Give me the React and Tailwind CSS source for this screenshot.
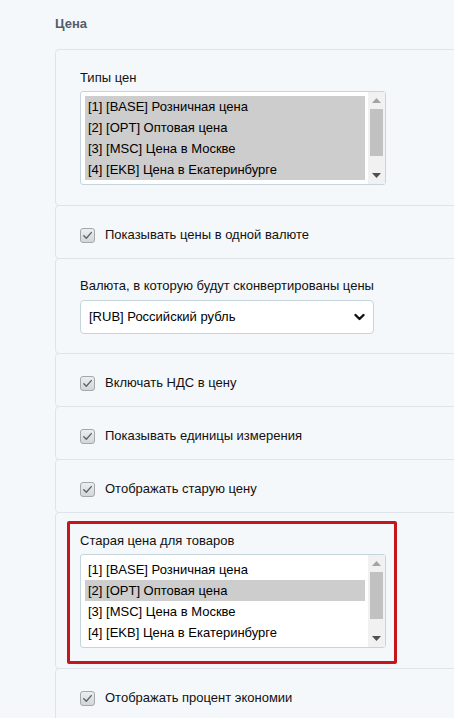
import React from 'react';

const priceTypes = [
  '[1] [BASE] Розничная цена',
  '[2] [OPT] Оптовая цена',
  '[3] [MSC] Цена в Москве',
  '[4] [EKB] Цена в Екатеринбурге',
];

function Checkbox() {
  return (
    <span className="flex h-[15px] w-[15px] shrink-0 items-center justify-center rounded-[3px] border border-[#a3a8ab] bg-gradient-to-b from-[#eceeef] to-[#d3d6d8]">
      <svg width="11" height="11" viewBox="0 0 11 11" fill="none">
        <path d="M1.8 5.8 L4.3 8.2 L9.3 2.6" stroke="#5e6366" strokeWidth="1.4" strokeLinecap="round" strokeLinejoin="round" />
      </svg>
    </span>
  );
}

function CheckRow({ label }) {
  return (
    <div className="-mt-px rounded-[4px] border border-[#dde5ea] pt-[21px] pb-[15px] pl-6">
      <label className="flex h-4 items-center gap-[10px] text-[13px] text-[#111]">
        <Checkbox />
        <span>{label}</span>
      </label>
    </div>
  );
}

function ListBox({ selected }) {
  return (
    <div className="flex h-[94px] w-[306px] rounded-[3px] border border-[#c6d4dc] bg-white">
      <div className="flex-1 pt-1 pl-1 pr-[3px]">
        {priceTypes.map((t, i) => (
          <div
            key={t}
            className={`flex h-[21px] items-center pl-[3px] text-[13px] text-black ${
              selected.includes(i) ? 'bg-[#cdcdcd]' : ''
            }`}
          >
            {t}
          </div>
        ))}
      </div>
      <div className="flex w-[17px] flex-col items-center bg-[#f1f1f1]">
        <div className="flex h-[17px] w-full items-center justify-center">
          <svg width="9" height="5" viewBox="0 0 9 5">
            <path d="M0 5 L4.5 0 L9 5 Z" fill="#a3a3a3" />
          </svg>
        </div>
        <div className="h-[47px] w-[13px] bg-[#c1c1c1]" />
        <div className="flex-1" />
        <div className="flex h-[17px] w-full items-center justify-center">
          <svg width="9" height="5" viewBox="0 0 9 5">
            <path d="M0 0 L9 0 L4.5 5 Z" fill="#505050" />
          </svg>
        </div>
      </div>
    </div>
  );
}

function ListRow({ label, selected, highlight }) {
  return (
    <div className="relative -mt-px rounded-[4px] border border-[#dde5ea] pt-5 pb-5 pl-6">
      <div className="h-4 text-[13px] leading-4 text-[#111]">{label}</div>
      <div className="mt-[5px]">
        <ListBox selected={selected} />
      </div>
      {highlight && (
        <div className="pointer-events-none absolute top-[8px] left-[11px] h-[143px] w-[330px] rounded-[2px] border-[3px] border-[#c4161c]" />
      )}
    </div>
  );
}

export default function App() {
  return (
    <div
      className="h-[718px] w-[454px] overflow-hidden bg-[#f5f8fa]"
      style={{ fontFamily: '"Liberation Sans", Arial, sans-serif' }}
    >
      <div className="pl-[55px] pt-4">
        <div className="h-4 text-[13px] leading-4 font-bold text-[#535c69]">Цена</div>
        <div className="mt-[18px] w-[520px]">
          <ListRow label="Типы цен" selected={[0, 1, 2, 3]} />
          <CheckRow label="Показывать цены в одной валюте" />
          <div className="-mt-px rounded-[4px] border border-[#dde5ea] pt-[19px] pb-[19px] pl-6">
            <div className="h-4 text-[13px] leading-4 text-[#111]">
              Валюта, в которую будут сконвертированы цены
            </div>
            <div className="mt-[6px] flex h-[34px] w-[294px] items-center justify-between rounded-[4px] border border-[#c6d4dc] bg-white pr-[8px] pl-[8px] text-[13px] text-black">
              <span>[RUB] Российский рубль</span>
              <svg width="11" height="8" viewBox="0 0 11 8" fill="none">
                <path d="M1.5 2 L5.5 6 L9.5 2" stroke="#111" strokeWidth="2.4" strokeLinecap="round" strokeLinejoin="round" />
              </svg>
            </div>
          </div>
          <CheckRow label="Включать НДС в цену" />
          <CheckRow label="Показывать единицы измерения" />
          <CheckRow label="Отображать старую цену" />
          <ListRow label="Старая цена для товаров" selected={[1]} highlight />
          <CheckRow label="Отображать процент экономии" />
        </div>
      </div>
    </div>
  );
}
